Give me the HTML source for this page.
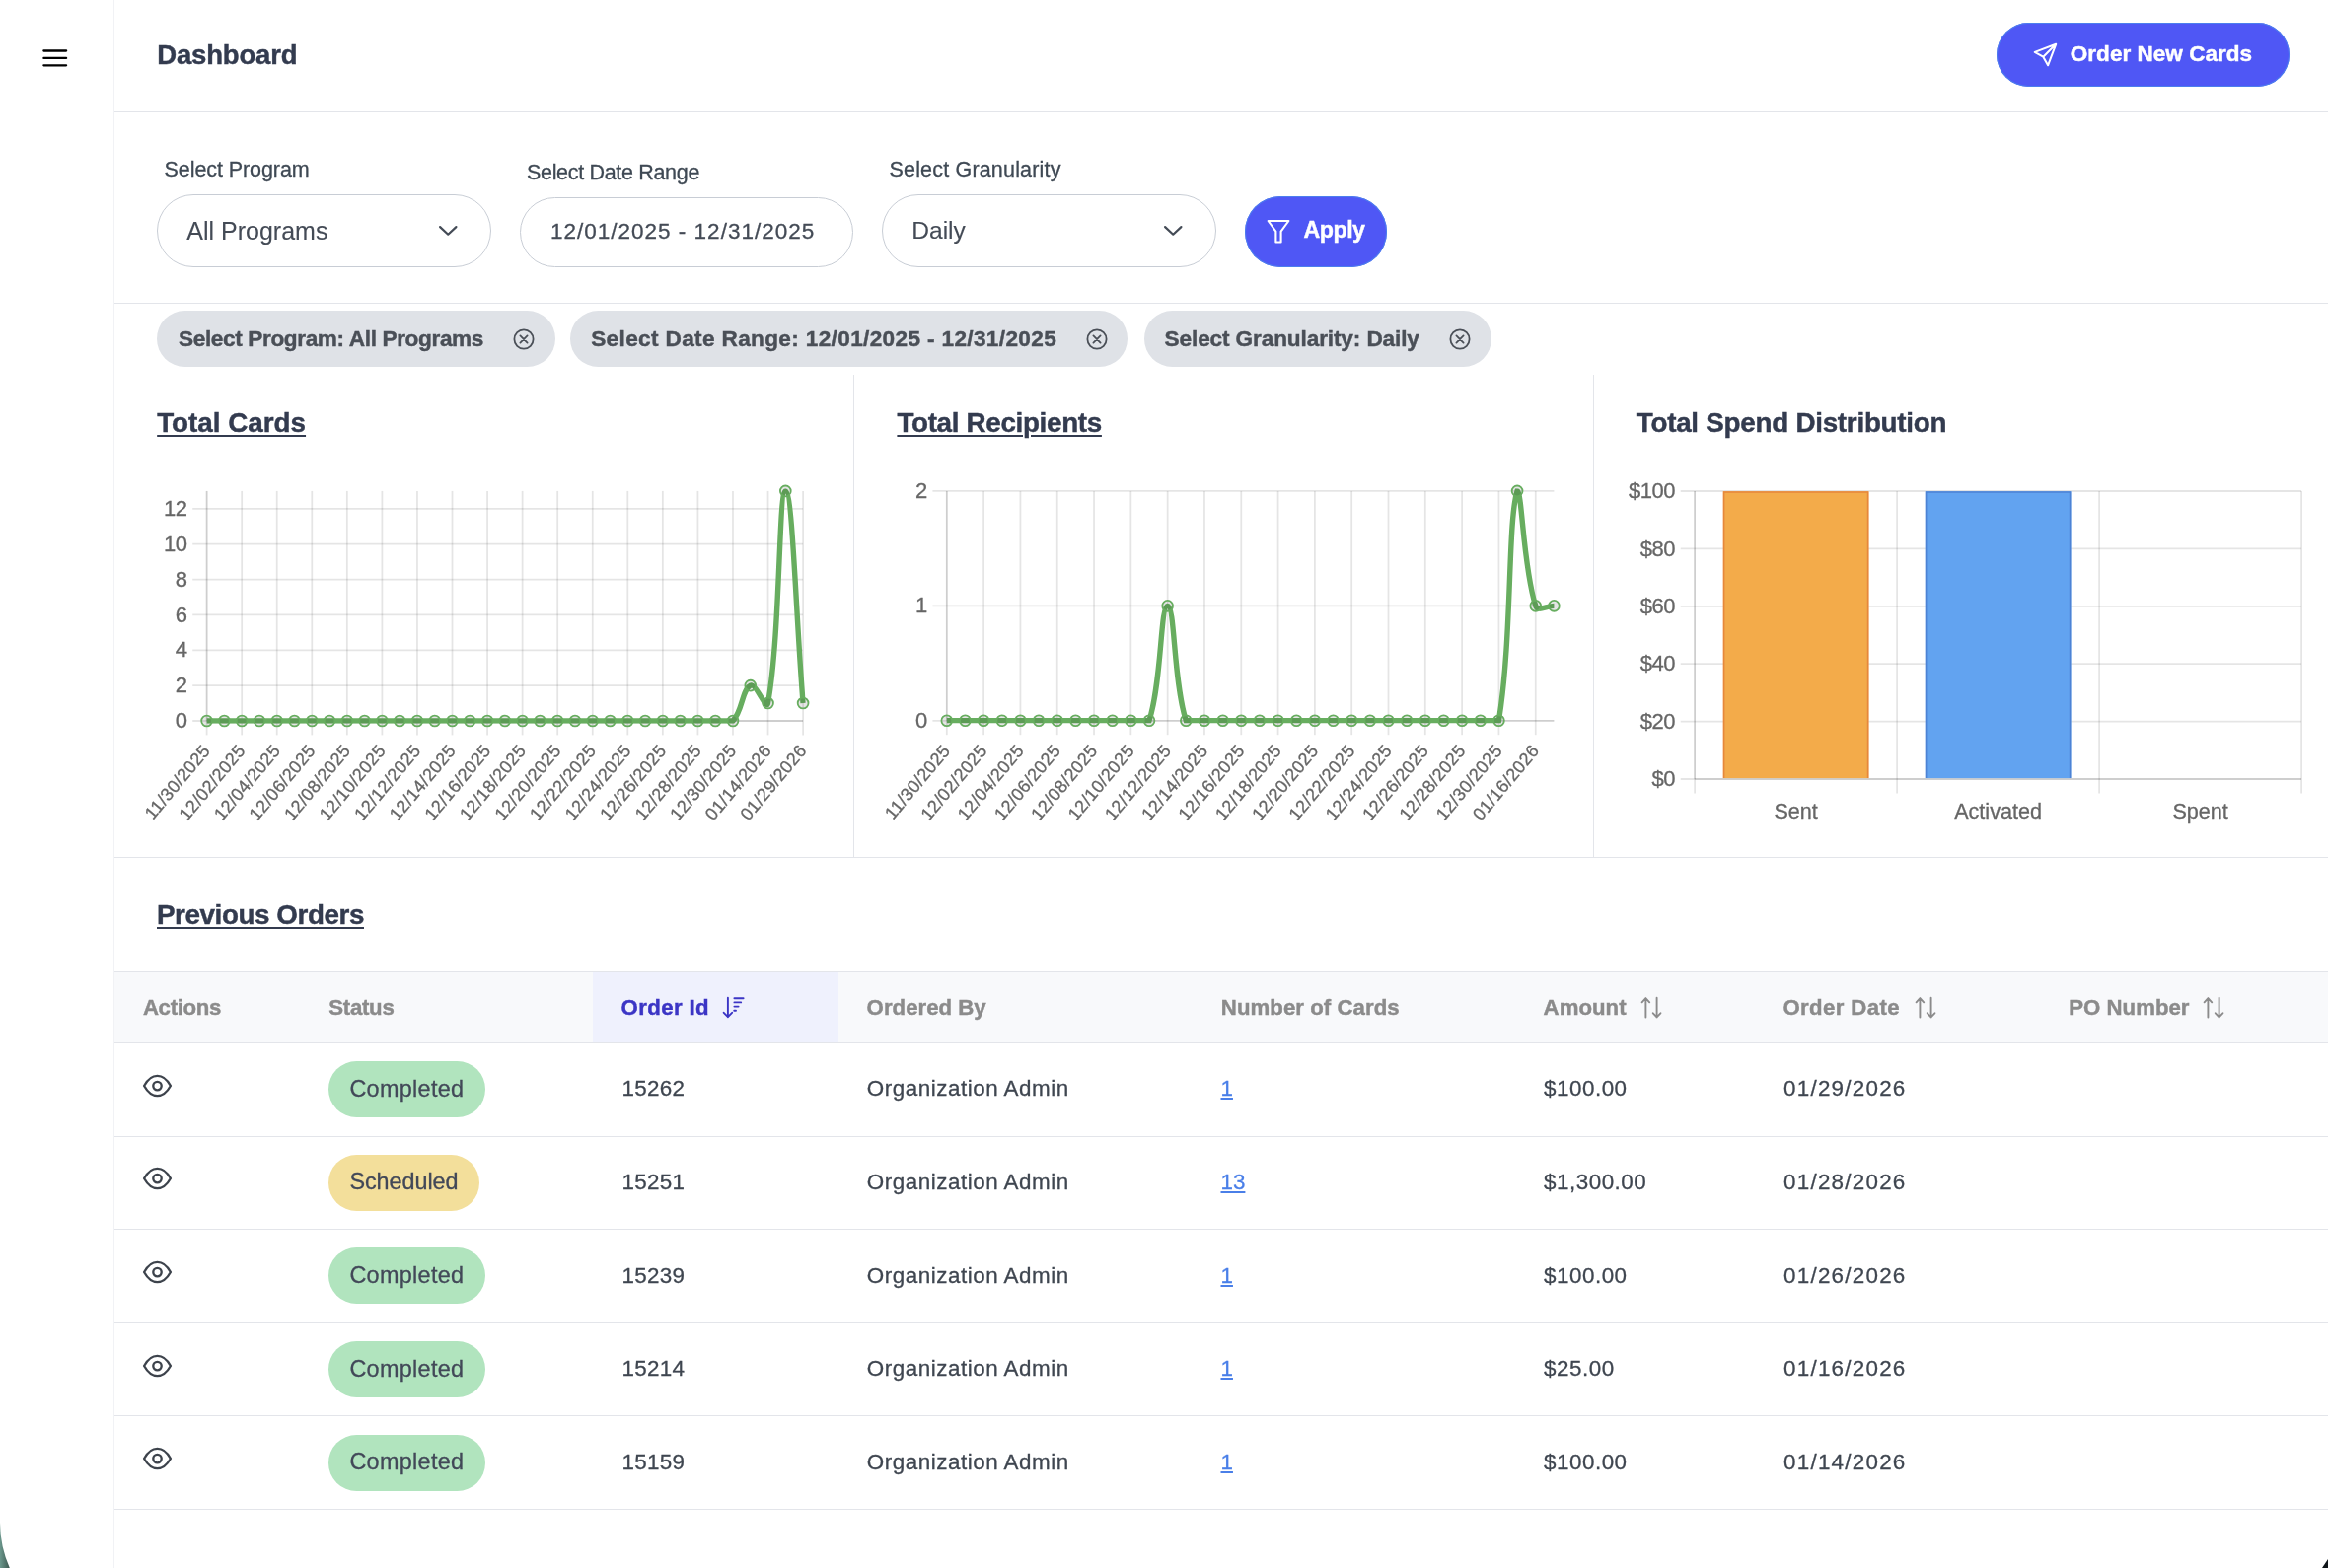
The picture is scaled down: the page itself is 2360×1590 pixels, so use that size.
<!DOCTYPE html>
<html><head><meta charset="utf-8"><title>Dashboard</title>
<style>
html,body{margin:0;padding:0;background:#fff;}
body{width:2360px;height:1590px;position:relative;overflow:hidden;font-family:"Liberation Sans", sans-serif;}
.wrap{position:absolute;left:0;top:0;width:2360px;height:1590px;will-change:transform;}
.a{position:absolute;display:block;}
.t{position:absolute;white-space:nowrap;line-height:1;}
</style></head><body>
<div class="wrap">
<div class="a" style="left:115px;top:0px;width:1px;height:1590px;background:#f1f2f5;"></div>
<div class="a" style="left:116px;top:113px;width:2244px;height:1px;background:#e3e5ea;"></div>
<div class="a" style="left:116px;top:307px;width:2244px;height:1px;background:#e3e5ea;"></div>
<div class="a" style="left:116px;top:869px;width:2244px;height:1px;background:#e3e5ea;"></div>
<div class="a" style="left:865px;top:380px;width:1px;height:489px;background:#e3e5ea;"></div>
<div class="a" style="left:1615px;top:380px;width:1px;height:489px;background:#e3e5ea;"></div>
<svg class="a" style="left:40px;top:46px" width="32" height="26" viewBox="0 0 32 26"><g stroke="#000" stroke-width="2.3" stroke-linecap="round"><line x1="4.4" y1="5.5" x2="27.1" y2="5.5"/><line x1="4.4" y1="12.9" x2="27.1" y2="12.9"/><line x1="4.4" y1="20.3" x2="27.1" y2="20.3"/></g></svg>
<div class="t" style="left:159.30px;top:41.72px;font-size:27.5px;font-weight:bold;color:#333b4f;letter-spacing:-0.18px;-webkit-text-stroke:0.45px #333b4f;">Dashboard</div>
<div class="a" style="left:2024px;top:23px;width:297px;height:65px;background:#4f57f5;border-radius:33px;box-shadow:inset 0 0 0 1px #4c7fee;"></div>
<svg class="a" style="left:2060px;top:42px" width="28" height="28" viewBox="0 0 28 28"><path d="M24.2 2.8 L2.7 10.9 L11.3 15.7 L16.1 24.3 Z M24.2 2.8 L11.3 15.7" fill="none" stroke="#fff" stroke-width="2" stroke-linejoin="round" stroke-linecap="round"/></svg>
<div class="t" style="left:2098.80px;top:44.25px;font-size:22.5px;font-weight:bold;color:#fff;letter-spacing:0.03px;-webkit-text-stroke:0.45px #fff;">Order New Cards</div>
<div class="t" style="left:166.60px;top:161.90px;font-size:21.5px;font-weight:normal;color:#3f4954;letter-spacing:-0.08px;-webkit-text-stroke:0.3px #3f4954;">Select Program</div>
<div class="t" style="left:534.00px;top:165.00px;font-size:21.5px;font-weight:normal;color:#3f4954;letter-spacing:-0.32px;-webkit-text-stroke:0.3px #3f4954;">Select Date Range</div>
<div class="t" style="left:901.50px;top:162.20px;font-size:21.5px;font-weight:normal;color:#3f4954;letter-spacing:0.18px;-webkit-text-stroke:0.3px #3f4954;">Select Granularity</div>
<div class="a" style="left:159px;top:197px;width:339px;height:74px;box-sizing:border-box;border:1.5px solid #c8cdd5;border-radius:37.0px;background:#fff"></div>
<div class="a" style="left:527px;top:200px;width:338px;height:71px;box-sizing:border-box;border:1.5px solid #c8cdd5;border-radius:35.5px;background:#fff"></div>
<div class="a" style="left:894px;top:197px;width:339px;height:74px;box-sizing:border-box;border:1.5px solid #c8cdd5;border-radius:37.0px;background:#fff"></div>
<div class="t" style="left:189.30px;top:221.84px;font-size:25px;font-weight:normal;color:#444b56;-webkit-text-stroke:0.1px #444b56;">All Programs</div>
<div class="t" style="left:924.20px;top:222.18px;font-size:24.6px;font-weight:normal;color:#444b56;-webkit-text-stroke:0.1px #444b56;">Daily</div>
<div class="t" style="left:558.00px;top:224.15px;font-size:22.5px;font-weight:normal;color:#444b56;letter-spacing:1.0px;-webkit-text-stroke:0.3px #444b56;">12/01/2025 - 12/31/2025</div>
<svg class="a" style="left:441.5px;top:226px" width="26" height="17" viewBox="0 0 26 17"><path d="M4.1 4.1 L12.25 11.7 L20.4 4.1" fill="none" stroke="#444b56" stroke-width="2.2" stroke-linecap="round" stroke-linejoin="round"/></svg>
<svg class="a" style="left:1176.8px;top:226px" width="26" height="17" viewBox="0 0 26 17"><path d="M4.1 4.1 L12.25 11.7 L20.4 4.1" fill="none" stroke="#444b56" stroke-width="2.2" stroke-linecap="round" stroke-linejoin="round"/></svg>
<div class="a" style="left:1262px;top:199px;width:144px;height:72px;background:#4f57f5;border-radius:36px;box-shadow:inset 0 0 0 1px #4c7fee;"></div>
<svg class="a" style="left:1282px;top:220px" width="28" height="30" viewBox="0 0 28 30"><path d="M3.6 4 L24.4 4 L16.6 14.6 L16.6 25.5 L11.4 25.5 L11.4 14.6 Z" fill="none" stroke="#fff" stroke-width="2.1" stroke-linejoin="round"/></svg>
<div class="t" style="left:1321.60px;top:222.26px;font-size:23.2px;font-weight:bold;color:#fff;letter-spacing:-0.5px;-webkit-text-stroke:0.45px #fff;">Apply</div>
<div class="a" style="left:159px;top:315px;width:404px;height:57px;background:#dfe2e7;border-radius:28.5px;"></div>
<div class="t" style="left:181.00px;top:332.97px;font-size:22.6px;font-weight:bold;color:#4a4f57;letter-spacing:-0.37px;-webkit-text-stroke:0.45px #4a4f57;">Select Program: All Programs</div>
<svg class="a" style="left:518px;top:330.8px" width="26" height="26" viewBox="0 0 26 26"><circle cx="13" cy="13" r="9.6" fill="none" stroke="#4a4f57" stroke-width="1.8"/><path d="M9.4 9.4 L16.6 16.6 M16.6 9.4 L9.4 16.6" stroke="#4a4f57" stroke-width="1.8" stroke-linecap="round"/></svg>
<div class="a" style="left:578px;top:315px;width:565.4000000000001px;height:57px;background:#dfe2e7;border-radius:28.5px;"></div>
<div class="t" style="left:599.20px;top:332.97px;font-size:22.6px;font-weight:bold;color:#4a4f57;letter-spacing:0.35px;-webkit-text-stroke:0.45px #4a4f57;">Select Date Range: 12/01/2025 - 12/31/2025</div>
<svg class="a" style="left:1098.5px;top:330.8px" width="26" height="26" viewBox="0 0 26 26"><circle cx="13" cy="13" r="9.6" fill="none" stroke="#4a4f57" stroke-width="1.8"/><path d="M9.4 9.4 L16.6 16.6 M16.6 9.4 L9.4 16.6" stroke="#4a4f57" stroke-width="1.8" stroke-linecap="round"/></svg>
<div class="a" style="left:1159.7px;top:315px;width:352.29999999999995px;height:57px;background:#dfe2e7;border-radius:28.5px;"></div>
<div class="t" style="left:1180.60px;top:332.97px;font-size:22.6px;font-weight:bold;color:#4a4f57;letter-spacing:-0.12px;-webkit-text-stroke:0.45px #4a4f57;">Select Granularity: Daily</div>
<svg class="a" style="left:1466.5px;top:330.8px" width="26" height="26" viewBox="0 0 26 26"><circle cx="13" cy="13" r="9.6" fill="none" stroke="#4a4f57" stroke-width="1.8"/><path d="M9.4 9.4 L16.6 16.6 M16.6 9.4 L9.4 16.6" stroke="#4a4f57" stroke-width="1.8" stroke-linecap="round"/></svg>
<div class="t" style="left:159.20px;top:415.27px;font-size:27.8px;font-weight:bold;color:#333b4f;-webkit-text-stroke:0.45px #333b4f;text-decoration:underline;text-decoration-thickness:2px;text-underline-offset:3px;">Total Cards</div>
<div class="t" style="left:909.40px;top:415.27px;font-size:27.8px;font-weight:bold;color:#333b4f;letter-spacing:-0.32px;-webkit-text-stroke:0.45px #333b4f;text-decoration:underline;text-decoration-thickness:2px;text-underline-offset:3px;">Total Recipients</div>
<div class="t" style="left:1658.80px;top:415.27px;font-size:27.8px;font-weight:bold;color:#333b4f;letter-spacing:-0.26px;-webkit-text-stroke:0.45px #333b4f;">Total Spend Distribution</div>
<div class="t" style="left:159.00px;top:913.77px;font-size:27.8px;font-weight:bold;color:#333b4f;letter-spacing:-0.42px;-webkit-text-stroke:0.45px #333b4f;text-decoration:underline;text-decoration-thickness:2px;text-underline-offset:3px;">Previous Orders</div>
<svg class="a" style="left:0;top:0;font-family:'Liberation Sans', sans-serif" width="2360" height="1590" viewBox="0 0 2360 1590"><line x1="195.20" y1="731.00" x2="814.10" y2="731.00" stroke="rgba(0,0,0,0.1)" stroke-width="1.8"/><line x1="195.20" y1="695.14" x2="814.10" y2="695.14" stroke="rgba(0,0,0,0.1)" stroke-width="1.8"/><line x1="195.20" y1="659.28" x2="814.10" y2="659.28" stroke="rgba(0,0,0,0.1)" stroke-width="1.8"/><line x1="195.20" y1="623.42" x2="814.10" y2="623.42" stroke="rgba(0,0,0,0.1)" stroke-width="1.8"/><line x1="195.20" y1="587.55" x2="814.10" y2="587.55" stroke="rgba(0,0,0,0.1)" stroke-width="1.8"/><line x1="195.20" y1="551.69" x2="814.10" y2="551.69" stroke="rgba(0,0,0,0.1)" stroke-width="1.8"/><line x1="195.20" y1="515.83" x2="814.10" y2="515.83" stroke="rgba(0,0,0,0.1)" stroke-width="1.8"/><line x1="209.60" y1="497.90" x2="209.60" y2="745.40" stroke="rgba(0,0,0,0.1)" stroke-width="1.8"/><line x1="245.16" y1="497.90" x2="245.16" y2="745.40" stroke="rgba(0,0,0,0.1)" stroke-width="1.8"/><line x1="280.72" y1="497.90" x2="280.72" y2="745.40" stroke="rgba(0,0,0,0.1)" stroke-width="1.8"/><line x1="316.28" y1="497.90" x2="316.28" y2="745.40" stroke="rgba(0,0,0,0.1)" stroke-width="1.8"/><line x1="351.84" y1="497.90" x2="351.84" y2="745.40" stroke="rgba(0,0,0,0.1)" stroke-width="1.8"/><line x1="387.39" y1="497.90" x2="387.39" y2="745.40" stroke="rgba(0,0,0,0.1)" stroke-width="1.8"/><line x1="422.95" y1="497.90" x2="422.95" y2="745.40" stroke="rgba(0,0,0,0.1)" stroke-width="1.8"/><line x1="458.51" y1="497.90" x2="458.51" y2="745.40" stroke="rgba(0,0,0,0.1)" stroke-width="1.8"/><line x1="494.07" y1="497.90" x2="494.07" y2="745.40" stroke="rgba(0,0,0,0.1)" stroke-width="1.8"/><line x1="529.63" y1="497.90" x2="529.63" y2="745.40" stroke="rgba(0,0,0,0.1)" stroke-width="1.8"/><line x1="565.19" y1="497.90" x2="565.19" y2="745.40" stroke="rgba(0,0,0,0.1)" stroke-width="1.8"/><line x1="600.75" y1="497.90" x2="600.75" y2="745.40" stroke="rgba(0,0,0,0.1)" stroke-width="1.8"/><line x1="636.31" y1="497.90" x2="636.31" y2="745.40" stroke="rgba(0,0,0,0.1)" stroke-width="1.8"/><line x1="671.86" y1="497.90" x2="671.86" y2="745.40" stroke="rgba(0,0,0,0.1)" stroke-width="1.8"/><line x1="707.42" y1="497.90" x2="707.42" y2="745.40" stroke="rgba(0,0,0,0.1)" stroke-width="1.8"/><line x1="742.98" y1="497.90" x2="742.98" y2="745.40" stroke="rgba(0,0,0,0.1)" stroke-width="1.8"/><line x1="778.54" y1="497.90" x2="778.54" y2="745.40" stroke="rgba(0,0,0,0.1)" stroke-width="1.8"/><line x1="814.10" y1="497.90" x2="814.10" y2="745.40" stroke="rgba(0,0,0,0.1)" stroke-width="1.8"/><line x1="209.60" y1="497.90" x2="209.60" y2="731.00" stroke="rgba(0,0,0,0.1)" stroke-width="1.8"/><line x1="209.60" y1="731.00" x2="814.10" y2="731.00" stroke="rgba(0,0,0,0.1)" stroke-width="1.8"/><text x="189.60" y="738.10" text-anchor="end" font-size="22" letter-spacing="-0.45" fill="#666666" stroke="#666666" stroke-width="0.3">0</text><text x="189.60" y="702.24" text-anchor="end" font-size="22" letter-spacing="-0.45" fill="#666666" stroke="#666666" stroke-width="0.3">2</text><text x="189.60" y="666.38" text-anchor="end" font-size="22" letter-spacing="-0.45" fill="#666666" stroke="#666666" stroke-width="0.3">4</text><text x="189.60" y="630.52" text-anchor="end" font-size="22" letter-spacing="-0.45" fill="#666666" stroke="#666666" stroke-width="0.3">6</text><text x="189.60" y="594.65" text-anchor="end" font-size="22" letter-spacing="-0.45" fill="#666666" stroke="#666666" stroke-width="0.3">8</text><text x="189.60" y="558.79" text-anchor="end" font-size="22" letter-spacing="-0.45" fill="#666666" stroke="#666666" stroke-width="0.3">10</text><text x="189.60" y="522.93" text-anchor="end" font-size="22" letter-spacing="-0.45" fill="#666666" stroke="#666666" stroke-width="0.3">12</text><text transform="translate(209.10 757.60) rotate(-50)" x="0" y="6.4" text-anchor="end" font-size="18" letter-spacing="0.3" fill="#666666" stroke="#666666" stroke-width="0.3">11/30/2025</text><text transform="translate(244.66 757.60) rotate(-50)" x="0" y="6.4" text-anchor="end" font-size="18" letter-spacing="0.3" fill="#666666" stroke="#666666" stroke-width="0.3">12/02/2025</text><text transform="translate(280.22 757.60) rotate(-50)" x="0" y="6.4" text-anchor="end" font-size="18" letter-spacing="0.3" fill="#666666" stroke="#666666" stroke-width="0.3">12/04/2025</text><text transform="translate(315.78 757.60) rotate(-50)" x="0" y="6.4" text-anchor="end" font-size="18" letter-spacing="0.3" fill="#666666" stroke="#666666" stroke-width="0.3">12/06/2025</text><text transform="translate(351.34 757.60) rotate(-50)" x="0" y="6.4" text-anchor="end" font-size="18" letter-spacing="0.3" fill="#666666" stroke="#666666" stroke-width="0.3">12/08/2025</text><text transform="translate(386.89 757.60) rotate(-50)" x="0" y="6.4" text-anchor="end" font-size="18" letter-spacing="0.3" fill="#666666" stroke="#666666" stroke-width="0.3">12/10/2025</text><text transform="translate(422.45 757.60) rotate(-50)" x="0" y="6.4" text-anchor="end" font-size="18" letter-spacing="0.3" fill="#666666" stroke="#666666" stroke-width="0.3">12/12/2025</text><text transform="translate(458.01 757.60) rotate(-50)" x="0" y="6.4" text-anchor="end" font-size="18" letter-spacing="0.3" fill="#666666" stroke="#666666" stroke-width="0.3">12/14/2025</text><text transform="translate(493.57 757.60) rotate(-50)" x="0" y="6.4" text-anchor="end" font-size="18" letter-spacing="0.3" fill="#666666" stroke="#666666" stroke-width="0.3">12/16/2025</text><text transform="translate(529.13 757.60) rotate(-50)" x="0" y="6.4" text-anchor="end" font-size="18" letter-spacing="0.3" fill="#666666" stroke="#666666" stroke-width="0.3">12/18/2025</text><text transform="translate(564.69 757.60) rotate(-50)" x="0" y="6.4" text-anchor="end" font-size="18" letter-spacing="0.3" fill="#666666" stroke="#666666" stroke-width="0.3">12/20/2025</text><text transform="translate(600.25 757.60) rotate(-50)" x="0" y="6.4" text-anchor="end" font-size="18" letter-spacing="0.3" fill="#666666" stroke="#666666" stroke-width="0.3">12/22/2025</text><text transform="translate(635.81 757.60) rotate(-50)" x="0" y="6.4" text-anchor="end" font-size="18" letter-spacing="0.3" fill="#666666" stroke="#666666" stroke-width="0.3">12/24/2025</text><text transform="translate(671.36 757.60) rotate(-50)" x="0" y="6.4" text-anchor="end" font-size="18" letter-spacing="0.3" fill="#666666" stroke="#666666" stroke-width="0.3">12/26/2025</text><text transform="translate(706.92 757.60) rotate(-50)" x="0" y="6.4" text-anchor="end" font-size="18" letter-spacing="0.3" fill="#666666" stroke="#666666" stroke-width="0.3">12/28/2025</text><text transform="translate(742.48 757.60) rotate(-50)" x="0" y="6.4" text-anchor="end" font-size="18" letter-spacing="0.3" fill="#666666" stroke="#666666" stroke-width="0.3">12/30/2025</text><text transform="translate(778.04 757.60) rotate(-50)" x="0" y="6.4" text-anchor="end" font-size="18" letter-spacing="0.3" fill="#666666" stroke="#666666" stroke-width="0.3">01/14/2026</text><text transform="translate(813.60 757.60) rotate(-50)" x="0" y="6.4" text-anchor="end" font-size="18" letter-spacing="0.3" fill="#666666" stroke="#666666" stroke-width="0.3">01/29/2026</text><clipPath id="clip1"><rect x="206.90" y="495.20" width="609.90" height="238.50"/></clipPath><path d="M209.60 731.00 C216.71 731.00 220.27 731.00 227.38 731.00 C234.49 731.00 238.05 731.00 245.16 731.00 C252.27 731.00 255.83 731.00 262.94 731.00 C270.05 731.00 273.61 731.00 280.72 731.00 C287.83 731.00 291.39 731.00 298.50 731.00 C305.61 731.00 309.16 731.00 316.28 731.00 C323.39 731.00 326.94 731.00 334.06 731.00 C341.17 731.00 344.72 731.00 351.84 731.00 C358.95 731.00 362.50 731.00 369.61 731.00 C376.73 731.00 380.28 731.00 387.39 731.00 C394.51 731.00 398.06 731.00 405.17 731.00 C412.29 731.00 415.84 731.00 422.95 731.00 C430.06 731.00 433.62 731.00 440.73 731.00 C447.84 731.00 451.40 731.00 458.51 731.00 C465.62 731.00 469.18 731.00 476.29 731.00 C483.40 731.00 486.96 731.00 494.07 731.00 C501.18 731.00 504.74 731.00 511.85 731.00 C518.96 731.00 522.52 731.00 529.63 731.00 C536.74 731.00 540.30 731.00 547.41 731.00 C554.52 731.00 558.08 731.00 565.19 731.00 C572.30 731.00 575.86 731.00 582.97 731.00 C590.08 731.00 593.64 731.00 600.75 731.00 C607.86 731.00 611.41 731.00 618.53 731.00 C625.64 731.00 629.19 731.00 636.31 731.00 C643.42 731.00 646.97 731.00 654.09 731.00 C661.20 731.00 664.75 731.00 671.86 731.00 C678.98 731.00 682.53 731.00 689.64 731.00 C696.76 731.00 700.31 731.00 707.42 731.00 C714.54 731.00 718.09 731.00 725.20 731.00 C732.31 731.00 738.61 731.00 742.98 731.00 C752.83 721.07 752.04 699.54 760.76 695.14 C766.26 692.36 777.05 721.33 778.54 713.07 C791.28 642.43 789.21 497.90 796.32 497.90 C803.43 497.90 806.99 627.00 814.10 713.07" fill="none" stroke="#67ad5f" stroke-width="5.4" stroke-linejoin="miter" clip-path="url(#clip1)"/><circle cx="209.60" cy="731.00" r="5.4" fill="rgba(0,0,0,0.1)" stroke="#67ad5f" stroke-width="1.8"/><circle cx="227.38" cy="731.00" r="5.4" fill="rgba(0,0,0,0.1)" stroke="#67ad5f" stroke-width="1.8"/><circle cx="245.16" cy="731.00" r="5.4" fill="rgba(0,0,0,0.1)" stroke="#67ad5f" stroke-width="1.8"/><circle cx="262.94" cy="731.00" r="5.4" fill="rgba(0,0,0,0.1)" stroke="#67ad5f" stroke-width="1.8"/><circle cx="280.72" cy="731.00" r="5.4" fill="rgba(0,0,0,0.1)" stroke="#67ad5f" stroke-width="1.8"/><circle cx="298.50" cy="731.00" r="5.4" fill="rgba(0,0,0,0.1)" stroke="#67ad5f" stroke-width="1.8"/><circle cx="316.28" cy="731.00" r="5.4" fill="rgba(0,0,0,0.1)" stroke="#67ad5f" stroke-width="1.8"/><circle cx="334.06" cy="731.00" r="5.4" fill="rgba(0,0,0,0.1)" stroke="#67ad5f" stroke-width="1.8"/><circle cx="351.84" cy="731.00" r="5.4" fill="rgba(0,0,0,0.1)" stroke="#67ad5f" stroke-width="1.8"/><circle cx="369.61" cy="731.00" r="5.4" fill="rgba(0,0,0,0.1)" stroke="#67ad5f" stroke-width="1.8"/><circle cx="387.39" cy="731.00" r="5.4" fill="rgba(0,0,0,0.1)" stroke="#67ad5f" stroke-width="1.8"/><circle cx="405.17" cy="731.00" r="5.4" fill="rgba(0,0,0,0.1)" stroke="#67ad5f" stroke-width="1.8"/><circle cx="422.95" cy="731.00" r="5.4" fill="rgba(0,0,0,0.1)" stroke="#67ad5f" stroke-width="1.8"/><circle cx="440.73" cy="731.00" r="5.4" fill="rgba(0,0,0,0.1)" stroke="#67ad5f" stroke-width="1.8"/><circle cx="458.51" cy="731.00" r="5.4" fill="rgba(0,0,0,0.1)" stroke="#67ad5f" stroke-width="1.8"/><circle cx="476.29" cy="731.00" r="5.4" fill="rgba(0,0,0,0.1)" stroke="#67ad5f" stroke-width="1.8"/><circle cx="494.07" cy="731.00" r="5.4" fill="rgba(0,0,0,0.1)" stroke="#67ad5f" stroke-width="1.8"/><circle cx="511.85" cy="731.00" r="5.4" fill="rgba(0,0,0,0.1)" stroke="#67ad5f" stroke-width="1.8"/><circle cx="529.63" cy="731.00" r="5.4" fill="rgba(0,0,0,0.1)" stroke="#67ad5f" stroke-width="1.8"/><circle cx="547.41" cy="731.00" r="5.4" fill="rgba(0,0,0,0.1)" stroke="#67ad5f" stroke-width="1.8"/><circle cx="565.19" cy="731.00" r="5.4" fill="rgba(0,0,0,0.1)" stroke="#67ad5f" stroke-width="1.8"/><circle cx="582.97" cy="731.00" r="5.4" fill="rgba(0,0,0,0.1)" stroke="#67ad5f" stroke-width="1.8"/><circle cx="600.75" cy="731.00" r="5.4" fill="rgba(0,0,0,0.1)" stroke="#67ad5f" stroke-width="1.8"/><circle cx="618.53" cy="731.00" r="5.4" fill="rgba(0,0,0,0.1)" stroke="#67ad5f" stroke-width="1.8"/><circle cx="636.31" cy="731.00" r="5.4" fill="rgba(0,0,0,0.1)" stroke="#67ad5f" stroke-width="1.8"/><circle cx="654.09" cy="731.00" r="5.4" fill="rgba(0,0,0,0.1)" stroke="#67ad5f" stroke-width="1.8"/><circle cx="671.86" cy="731.00" r="5.4" fill="rgba(0,0,0,0.1)" stroke="#67ad5f" stroke-width="1.8"/><circle cx="689.64" cy="731.00" r="5.4" fill="rgba(0,0,0,0.1)" stroke="#67ad5f" stroke-width="1.8"/><circle cx="707.42" cy="731.00" r="5.4" fill="rgba(0,0,0,0.1)" stroke="#67ad5f" stroke-width="1.8"/><circle cx="725.20" cy="731.00" r="5.4" fill="rgba(0,0,0,0.1)" stroke="#67ad5f" stroke-width="1.8"/><circle cx="742.98" cy="731.00" r="5.4" fill="rgba(0,0,0,0.1)" stroke="#67ad5f" stroke-width="1.8"/><circle cx="760.76" cy="695.14" r="5.4" fill="rgba(0,0,0,0.1)" stroke="#67ad5f" stroke-width="1.8"/><circle cx="778.54" cy="713.07" r="5.4" fill="rgba(0,0,0,0.1)" stroke="#67ad5f" stroke-width="1.8"/><circle cx="796.32" cy="497.90" r="5.4" fill="rgba(0,0,0,0.1)" stroke="#67ad5f" stroke-width="1.8"/><circle cx="814.10" cy="713.07" r="5.4" fill="rgba(0,0,0,0.1)" stroke="#67ad5f" stroke-width="1.8"/><line x1="945.40" y1="730.80" x2="1575.40" y2="730.80" stroke="rgba(0,0,0,0.1)" stroke-width="1.8"/><line x1="945.40" y1="614.35" x2="1575.40" y2="614.35" stroke="rgba(0,0,0,0.1)" stroke-width="1.8"/><line x1="945.40" y1="497.90" x2="1575.40" y2="497.90" stroke="rgba(0,0,0,0.1)" stroke-width="1.8"/><line x1="959.80" y1="497.90" x2="959.80" y2="745.20" stroke="rgba(0,0,0,0.1)" stroke-width="1.8"/><line x1="997.11" y1="497.90" x2="997.11" y2="745.20" stroke="rgba(0,0,0,0.1)" stroke-width="1.8"/><line x1="1034.42" y1="497.90" x2="1034.42" y2="745.20" stroke="rgba(0,0,0,0.1)" stroke-width="1.8"/><line x1="1071.73" y1="497.90" x2="1071.73" y2="745.20" stroke="rgba(0,0,0,0.1)" stroke-width="1.8"/><line x1="1109.04" y1="497.90" x2="1109.04" y2="745.20" stroke="rgba(0,0,0,0.1)" stroke-width="1.8"/><line x1="1146.35" y1="497.90" x2="1146.35" y2="745.20" stroke="rgba(0,0,0,0.1)" stroke-width="1.8"/><line x1="1183.65" y1="497.90" x2="1183.65" y2="745.20" stroke="rgba(0,0,0,0.1)" stroke-width="1.8"/><line x1="1220.96" y1="497.90" x2="1220.96" y2="745.20" stroke="rgba(0,0,0,0.1)" stroke-width="1.8"/><line x1="1258.27" y1="497.90" x2="1258.27" y2="745.20" stroke="rgba(0,0,0,0.1)" stroke-width="1.8"/><line x1="1295.58" y1="497.90" x2="1295.58" y2="745.20" stroke="rgba(0,0,0,0.1)" stroke-width="1.8"/><line x1="1332.89" y1="497.90" x2="1332.89" y2="745.20" stroke="rgba(0,0,0,0.1)" stroke-width="1.8"/><line x1="1370.20" y1="497.90" x2="1370.20" y2="745.20" stroke="rgba(0,0,0,0.1)" stroke-width="1.8"/><line x1="1407.51" y1="497.90" x2="1407.51" y2="745.20" stroke="rgba(0,0,0,0.1)" stroke-width="1.8"/><line x1="1444.82" y1="497.90" x2="1444.82" y2="745.20" stroke="rgba(0,0,0,0.1)" stroke-width="1.8"/><line x1="1482.13" y1="497.90" x2="1482.13" y2="745.20" stroke="rgba(0,0,0,0.1)" stroke-width="1.8"/><line x1="1519.44" y1="497.90" x2="1519.44" y2="745.20" stroke="rgba(0,0,0,0.1)" stroke-width="1.8"/><line x1="1556.75" y1="497.90" x2="1556.75" y2="745.20" stroke="rgba(0,0,0,0.1)" stroke-width="1.8"/><line x1="959.80" y1="497.90" x2="959.80" y2="730.80" stroke="rgba(0,0,0,0.1)" stroke-width="1.8"/><line x1="959.80" y1="730.80" x2="1575.40" y2="730.80" stroke="rgba(0,0,0,0.1)" stroke-width="1.8"/><text x="939.80" y="737.90" text-anchor="end" font-size="22" letter-spacing="-0.45" fill="#666666" stroke="#666666" stroke-width="0.3">0</text><text x="939.80" y="621.45" text-anchor="end" font-size="22" letter-spacing="-0.45" fill="#666666" stroke="#666666" stroke-width="0.3">1</text><text x="939.80" y="505.00" text-anchor="end" font-size="22" letter-spacing="-0.45" fill="#666666" stroke="#666666" stroke-width="0.3">2</text><text transform="translate(959.30 757.60) rotate(-50)" x="0" y="6.4" text-anchor="end" font-size="18" letter-spacing="0.3" fill="#666666" stroke="#666666" stroke-width="0.3">11/30/2025</text><text transform="translate(996.61 757.60) rotate(-50)" x="0" y="6.4" text-anchor="end" font-size="18" letter-spacing="0.3" fill="#666666" stroke="#666666" stroke-width="0.3">12/02/2025</text><text transform="translate(1033.92 757.60) rotate(-50)" x="0" y="6.4" text-anchor="end" font-size="18" letter-spacing="0.3" fill="#666666" stroke="#666666" stroke-width="0.3">12/04/2025</text><text transform="translate(1071.23 757.60) rotate(-50)" x="0" y="6.4" text-anchor="end" font-size="18" letter-spacing="0.3" fill="#666666" stroke="#666666" stroke-width="0.3">12/06/2025</text><text transform="translate(1108.54 757.60) rotate(-50)" x="0" y="6.4" text-anchor="end" font-size="18" letter-spacing="0.3" fill="#666666" stroke="#666666" stroke-width="0.3">12/08/2025</text><text transform="translate(1145.85 757.60) rotate(-50)" x="0" y="6.4" text-anchor="end" font-size="18" letter-spacing="0.3" fill="#666666" stroke="#666666" stroke-width="0.3">12/10/2025</text><text transform="translate(1183.15 757.60) rotate(-50)" x="0" y="6.4" text-anchor="end" font-size="18" letter-spacing="0.3" fill="#666666" stroke="#666666" stroke-width="0.3">12/12/2025</text><text transform="translate(1220.46 757.60) rotate(-50)" x="0" y="6.4" text-anchor="end" font-size="18" letter-spacing="0.3" fill="#666666" stroke="#666666" stroke-width="0.3">12/14/2025</text><text transform="translate(1257.77 757.60) rotate(-50)" x="0" y="6.4" text-anchor="end" font-size="18" letter-spacing="0.3" fill="#666666" stroke="#666666" stroke-width="0.3">12/16/2025</text><text transform="translate(1295.08 757.60) rotate(-50)" x="0" y="6.4" text-anchor="end" font-size="18" letter-spacing="0.3" fill="#666666" stroke="#666666" stroke-width="0.3">12/18/2025</text><text transform="translate(1332.39 757.60) rotate(-50)" x="0" y="6.4" text-anchor="end" font-size="18" letter-spacing="0.3" fill="#666666" stroke="#666666" stroke-width="0.3">12/20/2025</text><text transform="translate(1369.70 757.60) rotate(-50)" x="0" y="6.4" text-anchor="end" font-size="18" letter-spacing="0.3" fill="#666666" stroke="#666666" stroke-width="0.3">12/22/2025</text><text transform="translate(1407.01 757.60) rotate(-50)" x="0" y="6.4" text-anchor="end" font-size="18" letter-spacing="0.3" fill="#666666" stroke="#666666" stroke-width="0.3">12/24/2025</text><text transform="translate(1444.32 757.60) rotate(-50)" x="0" y="6.4" text-anchor="end" font-size="18" letter-spacing="0.3" fill="#666666" stroke="#666666" stroke-width="0.3">12/26/2025</text><text transform="translate(1481.63 757.60) rotate(-50)" x="0" y="6.4" text-anchor="end" font-size="18" letter-spacing="0.3" fill="#666666" stroke="#666666" stroke-width="0.3">12/28/2025</text><text transform="translate(1518.94 757.60) rotate(-50)" x="0" y="6.4" text-anchor="end" font-size="18" letter-spacing="0.3" fill="#666666" stroke="#666666" stroke-width="0.3">12/30/2025</text><text transform="translate(1556.25 757.60) rotate(-50)" x="0" y="6.4" text-anchor="end" font-size="18" letter-spacing="0.3" fill="#666666" stroke="#666666" stroke-width="0.3">01/16/2026</text><clipPath id="clip2"><rect x="957.10" y="495.20" width="621.00" height="238.30"/></clipPath><path d="M959.80 730.80 C967.26 730.80 970.99 730.80 978.45 730.80 C985.92 730.80 989.65 730.80 997.11 730.80 C1004.57 730.80 1008.30 730.80 1015.76 730.80 C1023.23 730.80 1026.96 730.80 1034.42 730.80 C1041.88 730.80 1045.61 730.80 1053.07 730.80 C1060.53 730.80 1064.27 730.80 1071.73 730.80 C1079.19 730.80 1082.92 730.80 1090.38 730.80 C1097.84 730.80 1101.57 730.80 1109.04 730.80 C1116.50 730.80 1120.23 730.80 1127.69 730.80 C1135.15 730.80 1138.88 730.80 1146.35 730.80 C1153.81 730.80 1162.96 730.80 1165.00 730.80 C1177.89 690.58 1176.19 614.35 1183.65 614.35 C1191.12 614.35 1189.42 690.58 1202.31 730.80 C1204.35 730.80 1213.50 730.80 1220.96 730.80 C1228.43 730.80 1232.16 730.80 1239.62 730.80 C1247.08 730.80 1250.81 730.80 1258.27 730.80 C1265.73 730.80 1269.47 730.80 1276.93 730.80 C1284.39 730.80 1288.12 730.80 1295.58 730.80 C1303.04 730.80 1306.77 730.80 1314.24 730.80 C1321.70 730.80 1325.43 730.80 1332.89 730.80 C1340.35 730.80 1344.08 730.80 1351.55 730.80 C1359.01 730.80 1362.74 730.80 1370.20 730.80 C1377.66 730.80 1381.39 730.80 1388.85 730.80 C1396.32 730.80 1400.05 730.80 1407.51 730.80 C1414.97 730.80 1418.70 730.80 1426.16 730.80 C1433.63 730.80 1437.36 730.80 1444.82 730.80 C1452.28 730.80 1456.01 730.80 1463.47 730.80 C1470.93 730.80 1474.67 730.80 1482.13 730.80 C1489.59 730.80 1493.32 730.80 1500.78 730.80 C1508.24 730.80 1518.33 730.80 1519.44 730.80 C1533.26 644.53 1528.17 528.86 1538.09 497.90 C1543.10 497.90 1543.86 574.13 1556.75 614.35 C1558.78 620.71 1567.94 614.35 1575.40 614.35" fill="none" stroke="#67ad5f" stroke-width="5.4" stroke-linejoin="miter" clip-path="url(#clip2)"/><circle cx="959.80" cy="730.80" r="5.4" fill="rgba(0,0,0,0.1)" stroke="#67ad5f" stroke-width="1.8"/><circle cx="978.45" cy="730.80" r="5.4" fill="rgba(0,0,0,0.1)" stroke="#67ad5f" stroke-width="1.8"/><circle cx="997.11" cy="730.80" r="5.4" fill="rgba(0,0,0,0.1)" stroke="#67ad5f" stroke-width="1.8"/><circle cx="1015.76" cy="730.80" r="5.4" fill="rgba(0,0,0,0.1)" stroke="#67ad5f" stroke-width="1.8"/><circle cx="1034.42" cy="730.80" r="5.4" fill="rgba(0,0,0,0.1)" stroke="#67ad5f" stroke-width="1.8"/><circle cx="1053.07" cy="730.80" r="5.4" fill="rgba(0,0,0,0.1)" stroke="#67ad5f" stroke-width="1.8"/><circle cx="1071.73" cy="730.80" r="5.4" fill="rgba(0,0,0,0.1)" stroke="#67ad5f" stroke-width="1.8"/><circle cx="1090.38" cy="730.80" r="5.4" fill="rgba(0,0,0,0.1)" stroke="#67ad5f" stroke-width="1.8"/><circle cx="1109.04" cy="730.80" r="5.4" fill="rgba(0,0,0,0.1)" stroke="#67ad5f" stroke-width="1.8"/><circle cx="1127.69" cy="730.80" r="5.4" fill="rgba(0,0,0,0.1)" stroke="#67ad5f" stroke-width="1.8"/><circle cx="1146.35" cy="730.80" r="5.4" fill="rgba(0,0,0,0.1)" stroke="#67ad5f" stroke-width="1.8"/><circle cx="1165.00" cy="730.80" r="5.4" fill="rgba(0,0,0,0.1)" stroke="#67ad5f" stroke-width="1.8"/><circle cx="1183.65" cy="614.35" r="5.4" fill="rgba(0,0,0,0.1)" stroke="#67ad5f" stroke-width="1.8"/><circle cx="1202.31" cy="730.80" r="5.4" fill="rgba(0,0,0,0.1)" stroke="#67ad5f" stroke-width="1.8"/><circle cx="1220.96" cy="730.80" r="5.4" fill="rgba(0,0,0,0.1)" stroke="#67ad5f" stroke-width="1.8"/><circle cx="1239.62" cy="730.80" r="5.4" fill="rgba(0,0,0,0.1)" stroke="#67ad5f" stroke-width="1.8"/><circle cx="1258.27" cy="730.80" r="5.4" fill="rgba(0,0,0,0.1)" stroke="#67ad5f" stroke-width="1.8"/><circle cx="1276.93" cy="730.80" r="5.4" fill="rgba(0,0,0,0.1)" stroke="#67ad5f" stroke-width="1.8"/><circle cx="1295.58" cy="730.80" r="5.4" fill="rgba(0,0,0,0.1)" stroke="#67ad5f" stroke-width="1.8"/><circle cx="1314.24" cy="730.80" r="5.4" fill="rgba(0,0,0,0.1)" stroke="#67ad5f" stroke-width="1.8"/><circle cx="1332.89" cy="730.80" r="5.4" fill="rgba(0,0,0,0.1)" stroke="#67ad5f" stroke-width="1.8"/><circle cx="1351.55" cy="730.80" r="5.4" fill="rgba(0,0,0,0.1)" stroke="#67ad5f" stroke-width="1.8"/><circle cx="1370.20" cy="730.80" r="5.4" fill="rgba(0,0,0,0.1)" stroke="#67ad5f" stroke-width="1.8"/><circle cx="1388.85" cy="730.80" r="5.4" fill="rgba(0,0,0,0.1)" stroke="#67ad5f" stroke-width="1.8"/><circle cx="1407.51" cy="730.80" r="5.4" fill="rgba(0,0,0,0.1)" stroke="#67ad5f" stroke-width="1.8"/><circle cx="1426.16" cy="730.80" r="5.4" fill="rgba(0,0,0,0.1)" stroke="#67ad5f" stroke-width="1.8"/><circle cx="1444.82" cy="730.80" r="5.4" fill="rgba(0,0,0,0.1)" stroke="#67ad5f" stroke-width="1.8"/><circle cx="1463.47" cy="730.80" r="5.4" fill="rgba(0,0,0,0.1)" stroke="#67ad5f" stroke-width="1.8"/><circle cx="1482.13" cy="730.80" r="5.4" fill="rgba(0,0,0,0.1)" stroke="#67ad5f" stroke-width="1.8"/><circle cx="1500.78" cy="730.80" r="5.4" fill="rgba(0,0,0,0.1)" stroke="#67ad5f" stroke-width="1.8"/><circle cx="1519.44" cy="730.80" r="5.4" fill="rgba(0,0,0,0.1)" stroke="#67ad5f" stroke-width="1.8"/><circle cx="1538.09" cy="497.90" r="5.4" fill="rgba(0,0,0,0.1)" stroke="#67ad5f" stroke-width="1.8"/><circle cx="1556.75" cy="614.35" r="5.4" fill="rgba(0,0,0,0.1)" stroke="#67ad5f" stroke-width="1.8"/><circle cx="1575.40" cy="614.35" r="5.4" fill="rgba(0,0,0,0.1)" stroke="#67ad5f" stroke-width="1.8"/><line x1="1703.70" y1="790.00" x2="2333.10" y2="790.00" stroke="rgba(0,0,0,0.1)" stroke-width="1.8"/><text x="1698.10" y="797.10" text-anchor="end" font-size="22" letter-spacing="-0.45" fill="#666666" stroke="#666666" stroke-width="0.3">$0</text><line x1="1703.70" y1="731.60" x2="2333.10" y2="731.60" stroke="rgba(0,0,0,0.1)" stroke-width="1.8"/><text x="1698.10" y="738.70" text-anchor="end" font-size="22" letter-spacing="-0.45" fill="#666666" stroke="#666666" stroke-width="0.3">$20</text><line x1="1703.70" y1="673.20" x2="2333.10" y2="673.20" stroke="rgba(0,0,0,0.1)" stroke-width="1.8"/><text x="1698.10" y="680.30" text-anchor="end" font-size="22" letter-spacing="-0.45" fill="#666666" stroke="#666666" stroke-width="0.3">$40</text><line x1="1703.70" y1="614.80" x2="2333.10" y2="614.80" stroke="rgba(0,0,0,0.1)" stroke-width="1.8"/><text x="1698.10" y="621.90" text-anchor="end" font-size="22" letter-spacing="-0.45" fill="#666666" stroke="#666666" stroke-width="0.3">$60</text><line x1="1703.70" y1="556.40" x2="2333.10" y2="556.40" stroke="rgba(0,0,0,0.1)" stroke-width="1.8"/><text x="1698.10" y="563.50" text-anchor="end" font-size="22" letter-spacing="-0.45" fill="#666666" stroke="#666666" stroke-width="0.3">$80</text><line x1="1703.70" y1="498.00" x2="2333.10" y2="498.00" stroke="rgba(0,0,0,0.1)" stroke-width="1.8"/><text x="1698.10" y="505.10" text-anchor="end" font-size="22" letter-spacing="-0.45" fill="#666666" stroke="#666666" stroke-width="0.3">$100</text><line x1="1718.10" y1="498.00" x2="1718.10" y2="804.40" stroke="rgba(0,0,0,0.1)" stroke-width="1.8"/><line x1="1923.10" y1="498.00" x2="1923.10" y2="804.40" stroke="rgba(0,0,0,0.1)" stroke-width="1.8"/><line x1="2128.10" y1="498.00" x2="2128.10" y2="804.40" stroke="rgba(0,0,0,0.1)" stroke-width="1.8"/><line x1="2333.10" y1="498.00" x2="2333.10" y2="804.40" stroke="rgba(0,0,0,0.1)" stroke-width="1.8"/><line x1="1718.10" y1="498.00" x2="1718.10" y2="790.00" stroke="rgba(0,0,0,0.1)" stroke-width="1.8"/><line x1="1718.10" y1="790.00" x2="2333.10" y2="790.00" stroke="rgba(0,0,0,0.1)" stroke-width="1.8"/><rect x="1746.80" y="498.20" width="147.60" height="290.90" fill="#f3ab4a"/><path d="M1747.60 789.10 L1747.60 499.00 L1893.60 499.00 L1893.60 789.10" fill="none" stroke="#e6873c" stroke-width="1.6"/><text x="1820.60" y="830" text-anchor="middle" font-size="21.6" fill="#666666" stroke="#666666" stroke-width="0.3">Sent</text><rect x="1951.80" y="498.20" width="147.60" height="290.90" fill="#62a3f0"/><path d="M1952.60 789.10 L1952.60 499.00 L2098.60 499.00 L2098.60 789.10" fill="none" stroke="#4d82d4" stroke-width="1.6"/><text x="2025.60" y="830" text-anchor="middle" font-size="21.6" fill="#666666" stroke="#666666" stroke-width="0.3">Activated</text><text x="2230.60" y="830" text-anchor="middle" font-size="21.6" fill="#666666" stroke="#666666" stroke-width="0.3">Spent</text></svg>
<div class="a" style="left:116px;top:985px;width:2244px;height:73px;background:#f8f9fb;box-sizing:border-box;border-top:1px solid #e3e5ea;border-bottom:1px solid #e3e5ea;"></div>
<div class="a" style="left:601px;top:986px;width:249px;height:71px;background:#eff1fd;"></div>
<div class="t" style="left:144.90px;top:1011.11px;font-size:22.2px;font-weight:bold;color:#8b8b8b;letter-spacing:-0.3px;-webkit-text-stroke:0.45px #8b8b8b;">Actions</div>
<div class="t" style="left:333.20px;top:1011.11px;font-size:22.2px;font-weight:bold;color:#8b8b8b;letter-spacing:-0.25px;-webkit-text-stroke:0.45px #8b8b8b;">Status</div>
<div class="t" style="left:629.50px;top:1011.11px;font-size:22.2px;font-weight:bold;color:#3b35c5;letter-spacing:0.4px;-webkit-text-stroke:0.45px #3b35c5;">Order Id</div>
<div class="t" style="left:878.60px;top:1011.11px;font-size:22.2px;font-weight:bold;color:#8b8b8b;letter-spacing:0.03px;-webkit-text-stroke:0.45px #8b8b8b;">Ordered By</div>
<div class="t" style="left:1237.80px;top:1011.11px;font-size:22.2px;font-weight:bold;color:#8b8b8b;letter-spacing:0.06px;-webkit-text-stroke:0.45px #8b8b8b;">Number of Cards</div>
<div class="t" style="left:1564.60px;top:1011.11px;font-size:22.2px;font-weight:bold;color:#8b8b8b;letter-spacing:0.03px;-webkit-text-stroke:0.45px #8b8b8b;">Amount</div>
<div class="t" style="left:1807.40px;top:1011.11px;font-size:22.2px;font-weight:bold;color:#8b8b8b;letter-spacing:0.4px;-webkit-text-stroke:0.45px #8b8b8b;">Order Date</div>
<div class="t" style="left:2097.20px;top:1011.11px;font-size:22.2px;font-weight:bold;color:#8b8b8b;letter-spacing:0.03px;-webkit-text-stroke:0.45px #8b8b8b;">PO Number</div>
<svg class="a" style="left:1661.7px;top:1008px" width="26" height="28" viewBox="0 0 26 28"><g fill="none" stroke="#8b8b8b" stroke-width="1.9" stroke-linecap="round" stroke-linejoin="round"><path d="M6.4 23.6 L6.4 4.2 M2.6 8.3 L6.4 4.2 L10.2 8.3"/><path d="M17.6 3.8 L17.6 23.4 M13.8 19.3 L17.6 23.4 L21.4 19.3"/></g></svg>
<svg class="a" style="left:1939.9px;top:1008px" width="26" height="28" viewBox="0 0 26 28"><g fill="none" stroke="#8b8b8b" stroke-width="1.9" stroke-linecap="round" stroke-linejoin="round"><path d="M6.4 23.6 L6.4 4.2 M2.6 8.3 L6.4 4.2 L10.2 8.3"/><path d="M17.6 3.8 L17.6 23.4 M13.8 19.3 L17.6 23.4 L21.4 19.3"/></g></svg>
<svg class="a" style="left:2232.2px;top:1008px" width="26" height="28" viewBox="0 0 26 28"><g fill="none" stroke="#8b8b8b" stroke-width="1.9" stroke-linecap="round" stroke-linejoin="round"><path d="M6.4 23.6 L6.4 4.2 M2.6 8.3 L6.4 4.2 L10.2 8.3"/><path d="M17.6 3.8 L17.6 23.4 M13.8 19.3 L17.6 23.4 L21.4 19.3"/></g></svg>
<svg class="a" style="left:731px;top:1008px" width="26" height="28" viewBox="0 0 26 28"><g fill="none" stroke="#3b35c5" stroke-width="1.9" stroke-linecap="round" stroke-linejoin="round"><path d="M6.9 3.8 L6.9 23.2 M2.7 18.8 L6.9 23.2 L11.1 18.8"/><path d="M13.4 4.2 L22.6 4.2 M13.4 8.4 L20.2 8.4 M13.4 12.6 L17.6 12.6 M13.2 16.7 L15.0 16.7"/></g></svg>
<div class="a" style="left:116px;top:1152px;width:2244px;height:1px;background:#e3e5ea;"></div>
<svg class="a" style="left:143.9px;top:1087.70px" width="31" height="26" viewBox="0 0 31 26"><g fill="none" stroke="#3d434c" stroke-width="2.35" stroke-linejoin="round"><path d="M2.1 13 C6 6 10.6 2.9 15.5 2.9 C20.4 2.9 25 6 28.9 13 C25 20 20.4 23.1 15.5 23.1 C10.6 23.1 6 20 2.1 13 Z"/><circle cx="15.5" cy="13.1" r="4.2"/></g></svg>
<div class="a" style="left:333px;top:1076.1px;width:159px;height:57.0px;background:#b1e4be;border-radius:28.5px;"></div>
<div class="t" style="left:354.40px;top:1092.79px;font-size:23.4px;font-weight:normal;color:#424858;letter-spacing:0.32px;-webkit-text-stroke:0.3px #424858;">Completed</div>
<div class="t" style="left:630.60px;top:1093.34px;font-size:22.4px;font-weight:normal;color:#3f4650;letter-spacing:0.3px;-webkit-text-stroke:0.3px #3f4650;">15262</div>
<div class="t" style="left:878.80px;top:1093.34px;font-size:22.4px;font-weight:normal;color:#3f4650;letter-spacing:0.53px;-webkit-text-stroke:0.3px #3f4650;">Organization Admin</div>
<div class="t" style="left:1237.50px;top:1093.34px;font-size:22.4px;font-weight:normal;color:#4a7fe8;-webkit-text-stroke:0.3px #4a7fe8;text-decoration:underline;text-decoration-thickness:1.7px;text-underline-offset:2.2px;">1</div>
<div class="t" style="left:1565.00px;top:1093.34px;font-size:22.4px;font-weight:normal;color:#3f4650;letter-spacing:0.52px;-webkit-text-stroke:0.3px #3f4650;">$100.00</div>
<div class="t" style="left:1808.00px;top:1093.34px;font-size:22.4px;font-weight:normal;color:#3f4650;letter-spacing:1.25px;-webkit-text-stroke:0.3px #3f4650;">01/29/2026</div>
<div class="a" style="left:116px;top:1246px;width:2244px;height:1px;background:#e3e5ea;"></div>
<svg class="a" style="left:143.9px;top:1182.30px" width="31" height="26" viewBox="0 0 31 26"><g fill="none" stroke="#3d434c" stroke-width="2.35" stroke-linejoin="round"><path d="M2.1 13 C6 6 10.6 2.9 15.5 2.9 C20.4 2.9 25 6 28.9 13 C25 20 20.4 23.1 15.5 23.1 C10.6 23.1 6 20 2.1 13 Z"/><circle cx="15.5" cy="13.1" r="4.2"/></g></svg>
<div class="a" style="left:333px;top:1170.7px;width:153px;height:57.0px;background:#f3df9b;border-radius:28.5px;"></div>
<div class="t" style="left:354.40px;top:1187.39px;font-size:23.4px;font-weight:normal;color:#424858;letter-spacing:-0.05px;-webkit-text-stroke:0.3px #424858;">Scheduled</div>
<div class="t" style="left:630.60px;top:1187.94px;font-size:22.4px;font-weight:normal;color:#3f4650;letter-spacing:0.3px;-webkit-text-stroke:0.3px #3f4650;">15251</div>
<div class="t" style="left:878.80px;top:1187.94px;font-size:22.4px;font-weight:normal;color:#3f4650;letter-spacing:0.53px;-webkit-text-stroke:0.3px #3f4650;">Organization Admin</div>
<div class="t" style="left:1237.50px;top:1187.94px;font-size:22.4px;font-weight:normal;color:#4a7fe8;-webkit-text-stroke:0.3px #4a7fe8;text-decoration:underline;text-decoration-thickness:1.7px;text-underline-offset:2.2px;">13</div>
<div class="t" style="left:1565.00px;top:1187.94px;font-size:22.4px;font-weight:normal;color:#3f4650;letter-spacing:0.52px;-webkit-text-stroke:0.3px #3f4650;">$1,300.00</div>
<div class="t" style="left:1808.00px;top:1187.94px;font-size:22.4px;font-weight:normal;color:#3f4650;letter-spacing:1.25px;-webkit-text-stroke:0.3px #3f4650;">01/28/2026</div>
<div class="a" style="left:116px;top:1341px;width:2244px;height:1px;background:#e3e5ea;"></div>
<svg class="a" style="left:143.9px;top:1276.90px" width="31" height="26" viewBox="0 0 31 26"><g fill="none" stroke="#3d434c" stroke-width="2.35" stroke-linejoin="round"><path d="M2.1 13 C6 6 10.6 2.9 15.5 2.9 C20.4 2.9 25 6 28.9 13 C25 20 20.4 23.1 15.5 23.1 C10.6 23.1 6 20 2.1 13 Z"/><circle cx="15.5" cy="13.1" r="4.2"/></g></svg>
<div class="a" style="left:333px;top:1265.3px;width:159px;height:57.0px;background:#b1e4be;border-radius:28.5px;"></div>
<div class="t" style="left:354.40px;top:1281.99px;font-size:23.4px;font-weight:normal;color:#424858;letter-spacing:0.32px;-webkit-text-stroke:0.3px #424858;">Completed</div>
<div class="t" style="left:630.60px;top:1282.54px;font-size:22.4px;font-weight:normal;color:#3f4650;letter-spacing:0.3px;-webkit-text-stroke:0.3px #3f4650;">15239</div>
<div class="t" style="left:878.80px;top:1282.54px;font-size:22.4px;font-weight:normal;color:#3f4650;letter-spacing:0.53px;-webkit-text-stroke:0.3px #3f4650;">Organization Admin</div>
<div class="t" style="left:1237.50px;top:1282.54px;font-size:22.4px;font-weight:normal;color:#4a7fe8;-webkit-text-stroke:0.3px #4a7fe8;text-decoration:underline;text-decoration-thickness:1.7px;text-underline-offset:2.2px;">1</div>
<div class="t" style="left:1565.00px;top:1282.54px;font-size:22.4px;font-weight:normal;color:#3f4650;letter-spacing:0.52px;-webkit-text-stroke:0.3px #3f4650;">$100.00</div>
<div class="t" style="left:1808.00px;top:1282.54px;font-size:22.4px;font-weight:normal;color:#3f4650;letter-spacing:1.25px;-webkit-text-stroke:0.3px #3f4650;">01/26/2026</div>
<div class="a" style="left:116px;top:1435px;width:2244px;height:1px;background:#e3e5ea;"></div>
<svg class="a" style="left:143.9px;top:1371.50px" width="31" height="26" viewBox="0 0 31 26"><g fill="none" stroke="#3d434c" stroke-width="2.35" stroke-linejoin="round"><path d="M2.1 13 C6 6 10.6 2.9 15.5 2.9 C20.4 2.9 25 6 28.9 13 C25 20 20.4 23.1 15.5 23.1 C10.6 23.1 6 20 2.1 13 Z"/><circle cx="15.5" cy="13.1" r="4.2"/></g></svg>
<div class="a" style="left:333px;top:1359.9px;width:159px;height:57.0px;background:#b1e4be;border-radius:28.5px;"></div>
<div class="t" style="left:354.40px;top:1376.59px;font-size:23.4px;font-weight:normal;color:#424858;letter-spacing:0.32px;-webkit-text-stroke:0.3px #424858;">Completed</div>
<div class="t" style="left:630.60px;top:1377.14px;font-size:22.4px;font-weight:normal;color:#3f4650;letter-spacing:0.3px;-webkit-text-stroke:0.3px #3f4650;">15214</div>
<div class="t" style="left:878.80px;top:1377.14px;font-size:22.4px;font-weight:normal;color:#3f4650;letter-spacing:0.53px;-webkit-text-stroke:0.3px #3f4650;">Organization Admin</div>
<div class="t" style="left:1237.50px;top:1377.14px;font-size:22.4px;font-weight:normal;color:#4a7fe8;-webkit-text-stroke:0.3px #4a7fe8;text-decoration:underline;text-decoration-thickness:1.7px;text-underline-offset:2.2px;">1</div>
<div class="t" style="left:1565.00px;top:1377.14px;font-size:22.4px;font-weight:normal;color:#3f4650;letter-spacing:0.52px;-webkit-text-stroke:0.3px #3f4650;">$25.00</div>
<div class="t" style="left:1808.00px;top:1377.14px;font-size:22.4px;font-weight:normal;color:#3f4650;letter-spacing:1.25px;-webkit-text-stroke:0.3px #3f4650;">01/16/2026</div>
<div class="a" style="left:116px;top:1530px;width:2244px;height:1px;background:#e3e5ea;"></div>
<svg class="a" style="left:143.9px;top:1466.10px" width="31" height="26" viewBox="0 0 31 26"><g fill="none" stroke="#3d434c" stroke-width="2.35" stroke-linejoin="round"><path d="M2.1 13 C6 6 10.6 2.9 15.5 2.9 C20.4 2.9 25 6 28.9 13 C25 20 20.4 23.1 15.5 23.1 C10.6 23.1 6 20 2.1 13 Z"/><circle cx="15.5" cy="13.1" r="4.2"/></g></svg>
<div class="a" style="left:333px;top:1454.5px;width:159px;height:57.0px;background:#b1e4be;border-radius:28.5px;"></div>
<div class="t" style="left:354.40px;top:1471.19px;font-size:23.4px;font-weight:normal;color:#424858;letter-spacing:0.32px;-webkit-text-stroke:0.3px #424858;">Completed</div>
<div class="t" style="left:630.60px;top:1471.74px;font-size:22.4px;font-weight:normal;color:#3f4650;letter-spacing:0.3px;-webkit-text-stroke:0.3px #3f4650;">15159</div>
<div class="t" style="left:878.80px;top:1471.74px;font-size:22.4px;font-weight:normal;color:#3f4650;letter-spacing:0.53px;-webkit-text-stroke:0.3px #3f4650;">Organization Admin</div>
<div class="t" style="left:1237.50px;top:1471.74px;font-size:22.4px;font-weight:normal;color:#4a7fe8;-webkit-text-stroke:0.3px #4a7fe8;text-decoration:underline;text-decoration-thickness:1.7px;text-underline-offset:2.2px;">1</div>
<div class="t" style="left:1565.00px;top:1471.74px;font-size:22.4px;font-weight:normal;color:#3f4650;letter-spacing:0.52px;-webkit-text-stroke:0.3px #3f4650;">$100.00</div>
<div class="t" style="left:1808.00px;top:1471.74px;font-size:22.4px;font-weight:normal;color:#3f4650;letter-spacing:1.25px;-webkit-text-stroke:0.3px #3f4650;">01/14/2026</div>
<svg class="a" style="left:2350px;top:1578px" width="10" height="12" viewBox="2350 1578 10 12"><path d="M2360 1581 L2354 1590 L2360 1590 Z" fill="#10161a"/></svg>
<svg class="a" style="left:0;top:1540px" width="14" height="50" viewBox="0 1540 14 50"><defs><linearGradient id="cg" x1="0" y1="0" x2="1" y2="0"><stop offset="0" stop-color="#6b978c"/><stop offset="1" stop-color="#3c5850"/></linearGradient></defs><path d="M0 1544 A115 115 0 0 0 9.8 1590 L0 1590 Z" fill="url(#cg)"/></svg>
</div>
<script>(function(){var w=window.innerWidth;if(w&&Math.abs(w-2360)>2){var k=w/2360,e=document.querySelector('.wrap');e.style.transformOrigin='0 0';e.style.transform='scale('+k+')';document.body.style.width=w+'px';document.body.style.height=(1590*k)+'px';}})();</script>
</body></html>
